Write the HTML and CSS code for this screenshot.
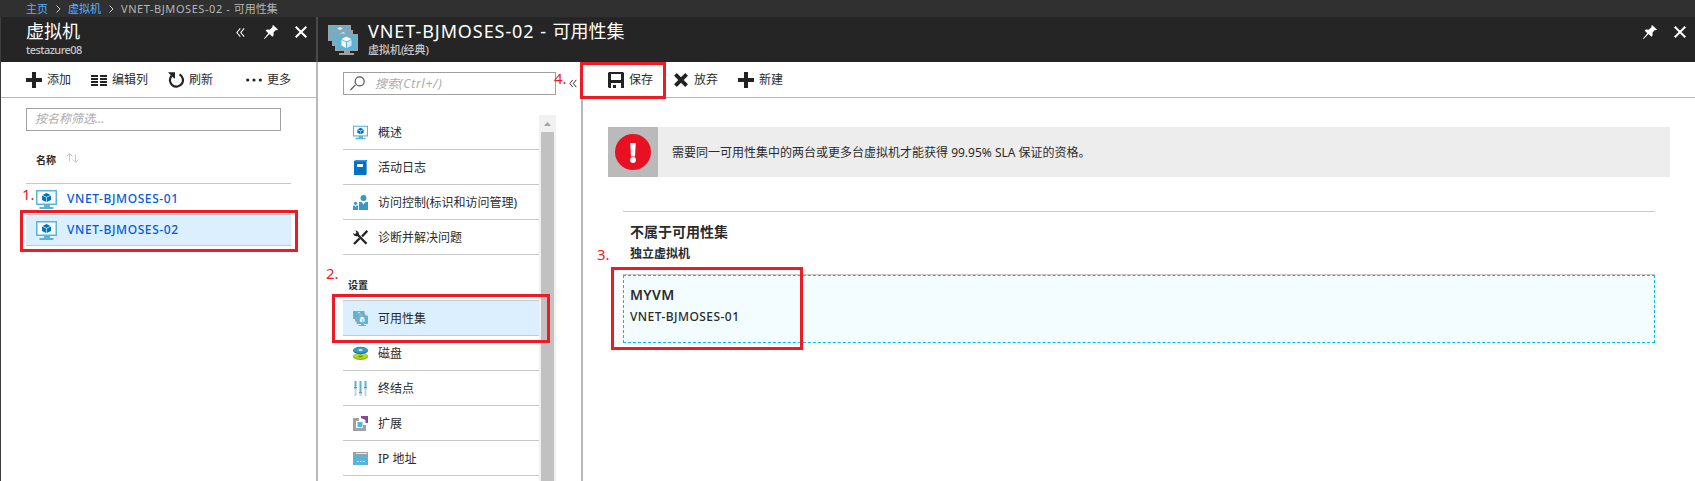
FILE: index.html
```html
<!DOCTYPE html>
<html lang="zh-CN">
<head>
<meta charset="utf-8">
<title>VNET-BJMOSES-02 - 可用性集</title>
<link rel="stylesheet" href="styles.css">
</head>
<body>
<svg class="defs" width="0" height="0">
  <symbol id="pin" viewBox="0 0 14 14"><path fill="#fff" d="M9 0l5 4.6-1.3.7-.9-.3-2.4 2.7.3 2.6-1.3 1.5-2.9-2.9L.6 14 0 13.4l4.3-5.1L1.6 5.6 3 4.5l2.7.2L8.6 2 8.3.9z"/></symbol>
  <symbol id="close" viewBox="0 0 12 12"><path stroke="#fff" stroke-width="2" d="M.7.7l10.6 10.6M11.3.7L.7 11.3"/></symbol>
  <symbol id="chev" viewBox="0 0 9 9"><path fill="none" stroke="currentColor" stroke-width="1.1" d="M4.3.4L.9 4.5l3.4 4.1M8.2.4L4.8 4.5l3.4 4.1"/></symbol>
  <symbol id="plus" viewBox="0 0 16 16"><path fill="#222" d="M6 0h4v6h6v4h-6v6H6v-6H0V6h6z"/></symbol>
  <symbol id="vm" viewBox="0 0 21 19"><path fill="#59b4d9" d="M0 0h21v15h-7v2h3.5v2h-14v-2H8v-2H0z"/><path fill="#fff" d="M1.5 1.5h18v12h-18z"/><path fill="#0072c6" d="M10.5 3l4 2-4 2-4-2zM6 5.600l4.200 2V12L6 9.900zM15 5.600l-4.200 2V12L15 9.900z"/></symbol>
  <symbol id="set" viewBox="0 0 30 30"><path fill="#a0a1a2" d="M0 0h23v5h2v4h5v17h-8v2h4v2H11v-2h5v-2H7v-5H4v-5H0z"/><path fill="#59b4d9" d="M1.500 1.500h20V5H4v9H1.500zM5 6.500h18.500V9H7v10.500H5zM8.500 10.500h20v14h-20z"/><path fill="#fff" d="M18.500 11.500l5 2.500-5 2.500-5-2.500zM13.500 15l4.500 2.200v5.800l-4.500-2.500z"/><path fill="#d5edf7" d="M23.500 15L19 17.200v5.800l4.500-2.500zM9 3.500l3-1.500 3 1.500-3 1.500zM12 8.500l3-1.500 3 1.500z"/></symbol>
</svg>

<nav class="crumbs">
  <a>主页</a><svg width="5" height="8" viewBox="0 0 5 8"><path d="M.5.5L4 4 .5 7.500"/></svg>
  <a>虚拟机</a><svg width="5" height="8" viewBox="0 0 5 8"><path d="M.5.5L4 4 .5 7.500"/></svg>
  <span class="current"><span class="lat">VNET-BJMOSES-02 - </span>可用性集</span>
</nav>

<div class="blades">
  <section class="blade list-blade">
    <header class="head">
      <div class="titles"><h1>虚拟机</h1><p class="account">testazure08</p></div>
      <div class="head-icons">
        <svg class="collapse" width="9" height="9"><use href="#chev"/></svg>
        <svg width="14" height="14"><use href="#pin"/></svg>
        <svg width="12" height="12"><use href="#close"/></svg>
      </div>
    </header>
    <div class="toolbar">
      <span class="cmd add"><svg width="16" height="16"><use href="#plus"/></svg>添加</span>
      <span class="cmd cols"><svg width="16" height="16" viewBox="0 0 16 16"><path fill="#222" d="M0 3h7v2H0zM9 3h7v2H9zM0 6h7v2H0zM9 6h7v2H9zM0 9h7v2H0zM9 9h7v2H9zM0 12h7v2H0zM9 12h7v2H9z"/></svg>编辑列</span>
      <span class="cmd refresh"><svg width="16" height="16" viewBox="0 0 16 16"><path fill="none" stroke="#222" stroke-width="2.200" d="M11.500 2.400A6.500 6.500 0 1 1 3.600 3.800"/><path fill="#222" d="M0 .3h7v6.500L5 5.300 2.800 3.200z"/></svg>刷新</span>
      <span class="cmd"><svg width="16" height="16" viewBox="0 0 16 16"><g fill="#222"><circle cx="1.700" cy="8" r="1.600"/><circle cx="8" cy="8" r="1.600"/><circle cx="14.300" cy="8" r="1.600"/></g></svg>更多</span>
    </div>
    <div class="filter">按名称筛选...</div>
    <div class="vm-table">
      <div class="th">名称<svg width="13" height="10" viewBox="0 0 13 10"><path fill="none" stroke="#c8c8c8" d="M3.500 8V.8M.5 3.500l3-3 3 3M9.500 1.500v7.500M6.500 6.300l3 3 3-3"/></svg></div>
      <div class="vm"><svg width="21" height="19"><use href="#vm"/></svg><a>VNET-BJMOSES-01</a></div>
      <div class="vm selected"><svg width="21" height="19"><use href="#vm"/></svg><a>VNET-BJMOSES-02</a></div>
    </div>
  </section>

  <section class="blade detail-blade">
    <header class="head">
      <svg class="blade-icon" width="30" height="30"><use href="#set"/></svg>
      <div class="titles"><h1><span class="lat">VNET-BJMOSES-02 - </span>可用性集</h1><p>虚拟机<span class="paren">(</span>经典<span class="paren">)</span></p></div>
      <div class="head-icons">
        <svg width="14" height="14"><use href="#pin"/></svg>
        <svg width="12" height="12"><use href="#close"/></svg>
      </div>
    </header>
    <div class="detail-body">
      <aside class="menu">
        <div class="search-row">
          <div class="search"><svg width="15" height="15" viewBox="0 0 15 15"><path fill="none" stroke="#555" stroke-width="1.200" d="M5.400 8.900L.5 14M5.200 5.300a4.500 4.500 0 1 0 9 0a4.500 4.500 0 1 0-9 0z"/></svg><span>搜索<span class="keys">(Ctrl+/)</span></span></div>
          <svg class="fold" width="8" height="9"><use href="#chev"/></svg>
        </div>
        <div class="scroller">
          <ul class="items">
            <li><svg width="15" height="15"><use href="#vm"/></svg>概述</li>
            <li><svg width="15" height="15" viewBox="0 0 15 15"><path fill="#0072c6" d="M1 1L3 0h11v13l-1 2H1z"/><path fill="#7ab8e2" d="M2 1.200L3 .5h10v.7zM13.200 1h.8v12l-.8 1.500z"/><path fill="#fff" d="M4 4h6v3H4z"/></svg>活动日志</li>
            <li><svg width="15" height="15" viewBox="0 0 15 15"><g fill="#3999c6"><circle cx="10.500" cy="3" r="3"/><path d="M6 7h2.500l2 2.500 2-2.500H15v8H6zM0 10.500h1.500l1 1.500 1-1.500H5V15H0z"/><circle cx="2.500" cy="8.300" r="1.600"/></g></svg>访问控制(标识和访问管理)</li>
            <li><svg width="15" height="15" viewBox="0 0 15 15"><path fill="none" stroke="#222" stroke-width="2.300" d="M3.500 3.500l10 10.300M9 6.500L14.300.8M6.500 8.500L1 14"/><path fill="#222" d="M2.500 0l3 2 .5 3-2 1.500L1 5.500 0 3l2 1 1.500-1z"/></svg>诊断并解决问题</li>
            <li class="group">设置</li>
            <li class="selected"><svg width="15" height="15"><use href="#set"/></svg>可用性集</li>
            <li><svg width="15" height="15" viewBox="0 0 15 15"><ellipse cx="7.500" cy="10.400" rx="7.500" ry="3.700" fill="#7fba00"/><ellipse cx="7.500" cy="9.800" rx="7" ry="2.900" fill="#b8d432"/><ellipse cx="7.500" cy="10.400" rx="2.500" ry=".9" fill="#6a9c00"/><ellipse cx="7.500" cy="4.500" rx="7.500" ry="3.700" fill="#0072c6"/><ellipse cx="7.500" cy="4" rx="7" ry="2.900" fill="#3999c6"/><ellipse cx="7.500" cy="4" rx="2.200" ry=".9" fill="#d5edf7"/></svg>磁盘</li>
            <li><svg width="15" height="15" viewBox="0 0 15 15"><path fill="#b8d8e8" d="M1.500 7h2v8h-2zM6.500 12h2v3h-2zM11.500 7h2v8h-2z"/><path fill="#59b4d9" d="M1.500 0h2v6h-2zM6.500 0h2v11h-2zM11.500 0h2v6h-2z"/><path fill="#8a8a8a" d="M1 6h3v1.300H1zM6 11h3v1.300H6zM11 6h3v1.300h-3z"/></svg>终结点</li>
            <li><svg width="15" height="15" viewBox="0 0 15 15"><path fill="#a0a1a2" d="M0 2h6v3H3v7h7V9h3v6H0z"/><path fill="#804998" d="M8 0h7v7h-2.500V4L8 2z"/><path fill="#59b4d9" d="M4.500 6h5v5h-5z"/></svg>扩展</li>
            <li><svg width="15" height="13" viewBox="0 0 15 13"><path fill="#59b4d9" d="M0 0h15v13H0z"/><path fill="#a0a1a2" d="M0 0h15v3H0z"/><path fill="#d5edf7" d="M3 1h11v1H3zM4 9h1.500v1H4zM7 9h1.500v1H7zM10 9h1.500v1H10z"/></svg><span class="ip">IP 地址</span></li>
          </ul>
          <div class="scrollbar"><svg width="7" height="4" viewBox="0 0 7 4"><path fill="#a3a3a3" d="M0 4L3.500 0 7 4z"/></svg><div class="thumb"></div></div>
        </div>
      </aside>
      <main class="content">
        <div class="toolbar">
          <span class="cmd save"><svg width="16" height="16" viewBox="0 0 16 16"><path fill="#222" fill-rule="evenodd" d="M0 1l1-1h14l1 1v15h-3v-5H3v5H1l-1-1zM3 2v6h10V2zM5 13h3v3H5z"/></svg>保存</span>
          <span class="cmd discard"><svg width="14" height="14" viewBox="0 0 14 14"><path stroke="#222" stroke-width="3.800" d="M1.400 1.400l11.200 11.200M12.600 1.400L1.400 12.600"/></svg>放弃</span>
          <span class="cmd"><svg width="16" height="16"><use href="#plus"/></svg>新建</span>
        </div>
        <div class="notice">
          <div class="badge"><svg width="36" height="36" viewBox="0 0 36 36"><circle cx="18" cy="18" r="18" fill="#e81123"/><path fill="#fff" d="M15.200 9h5.600l-.8 13.500h-4z"/><circle cx="18" cy="26" r="2.900" fill="#fff"/></svg></div>
          <p>需要同一可用性集中的两台或更多台虚拟机才能获得<span class="sla"> 99.95% SLA </span>保证的资格。</p>
        </div>
        <div class="group-box">
          <h2>不属于可用性集</h2>
          <h3>独立虚拟机</h3>
          <div class="drop"><strong>MYVM</strong><em>VNET-BJMOSES-01</em></div>
        </div>
      </main>
    </div>
  </section>
</div>

<div class="mark mark1"></div><span class="num num1">1.</span>
<div class="mark mark2"></div><span class="num num2">2.</span>
<div class="mark mark3"></div><span class="num num3">3.</span>
<div class="mark mark4"></div><span class="num num4">4.</span>
</body>
</html>
```
FILE: styles.css
```css
* { box-sizing: border-box; margin: 0; padding: 0; }
body { width: 1695px; height: 481px; overflow: hidden; position: relative; background: #fff; color: #2b2b2b; font: 12px/16px "Noto Sans", "Noto Sans CJK SC", sans-serif; white-space: nowrap; }
svg { flex: none; display: block; }
.defs { position: absolute; }
.crumbs { display: flex; align-items: center; height: 17px; padding-left: 26px; background: #303030; font-size: 11px; color: #b5b5b5; }
.crumbs a { color: #55b3ff; }
.crumbs .lat { letter-spacing: .56px; }
.crumbs svg { margin: 1px 7px 0 8px; fill: none; stroke: #ccc; }
.blades { display: flex; height: 464px; }
.blade { display: flex; flex-direction: column; }
.list-blade { width: 318px; border-left: 1px solid #3c3c3c; border-right: 2px solid #b8b8b8; }
.detail-blade { flex: 1; }
.head { display: flex; height: 45px; flex: none; background: #252525; color: #fff; }
.list-blade .head { margin-right: -2px; border-right: 2px solid #4a4a4a; padding-left: 25px; }
.titles { flex: 1; padding-top: 3px; }
h1 { font-size: 18px; line-height: 23px; font-weight: 400; }
h1 .lat { letter-spacing: .92px; }
.head p { font-size: 11px; line-height: 13px; font-weight: 500; color: #c8c8c8; }
.head .account { letter-spacing: -.55px; }
.paren { letter-spacing: -1px; }
.head-icons { display: flex; align-items: center; height: 30px; gap: 17px; padding-right: 9px; }
.collapse { margin-right: 2px; }
.detail-blade .head { padding-left: 10px; }
.blade-icon { margin: 8px 10px 0 0; }
.toolbar { display: flex; align-items: center; height: 36px; flex: none; border-bottom: 1px solid #b8b8b8; padding-left: 25px; }
.cmd { display: flex; align-items: center; gap: 5px; }
.add { margin-right: 20px; }
.cols { margin-right: 20px; }
.refresh { margin-right: 33px; }
.filter { width: 255px; height: 23px; margin: 10px 0 0 25px; padding: 2px 8px; border: 1px solid #a0a0a0; color: #aaa; font-style: italic; }
.vm-table { margin: 0 25px; }
.th { display: flex; align-items: center; height: 53px; padding: 6px 0 0 10px; border-bottom: 1px solid #c8c8c8; font-size: 10px; font-weight: 700; }
.th svg { margin: -4px 0 0 10px; }
.vm { display: flex; align-items: center; height: 31px; padding-left: 10px; gap: 10px; border-bottom: 1px solid #c8c8c8; }
.vm a { color: #015cda; font-weight: 500; letter-spacing: .6px; }
.selected { background: #dceffe; }
.detail-body { display: flex; flex: 1; }
.menu { width: 265px; border-right: 2px solid #b8b8b8; padding-left: 25px; }
.search-row { display: flex; align-items: center; height: 53px; padding-bottom: 10px; gap: 13px; }
.search { display: flex; align-items: center; width: 213px; height: 23px; padding-left: 6px; gap: 10px; border: 1px solid #a0a0a0; color: #aaa; font-style: italic; }
.keys { letter-spacing: .8px; }
.scroller { display: flex; height: 366px; }
.items { width: 196px; list-style: none; }
.items li { display: flex; align-items: center; height: 35px; padding: 2px 0 0 10px; gap: 10px; border-bottom: 1px solid #c8c8c8; }
.items li svg { margin-top: -2px; }
.items .group { height: 46px; padding: 15px 0 0 5px; font-size: 10px; font-weight: 700; }
.scrollbar { width: 17px; background: #f1f1f1; display: flex; flex-direction: column; align-items: center; padding-top: 7px; }
.thumb { width: 13px; flex: 1; margin-top: 6px; background: #c1c1c1; }
.content { flex: 1; }
.save { margin-right: 21px; }
.discard { gap: 6px; margin-right: 20px; }
.notice { display: flex; height: 50px; margin: 29px 25px 0; background: #ededed; }
.badge { display: flex; width: 50px; align-items: center; justify-content: center; background: #bababa; }
.notice p { padding: 18px 0 0 14px; }
.group-box { margin: 34px 40px 0; border-top: 1px solid #c8c8c8; }
h2 { font-size: 14px; line-height: 20px; padding: 10px 0 0 7px; font-weight: 600; }
h3 { font-size: 12px; line-height: 18px; padding: 3px 0 0 7px; font-weight: 600; }
.drop { display: flex; flex-direction: column; height: 68px; margin-top: 12px; padding: 9px 6px; border: 1px dashed #00bcf2; background: #f3fcff; box-shadow: 0 -1px #c8c8c8; }
.drop strong { font-size: 14px; line-height: 20px; font-weight: 600; letter-spacing: .3px; }
.drop em { font-style: normal; font-weight: 500; line-height: 18px; margin-top: 3px; letter-spacing: .45px; }
.mark { position: absolute; border: 3px solid #ed1c24; }
.mark1 { left: 20px; top: 210px; width: 278px; height: 42px; }
.mark2 { left: 332px; top: 294px; width: 218px; height: 49px; }
.mark3 { left: 611px; top: 267px; width: 192px; height: 83px; }
.mark4 { left: 580px; top: 62px; width: 86px; height: 37px; }
.num { position: absolute; color: #ed1c24; font-size: 15px; line-height: 20px; }
.num1 { left: 22px; top: 184px; }
.num2 { left: 326px; top: 263px; }
.num3 { left: 597px; top: 244px; }
.num4 { left: 554px; top: 68px; }
```
